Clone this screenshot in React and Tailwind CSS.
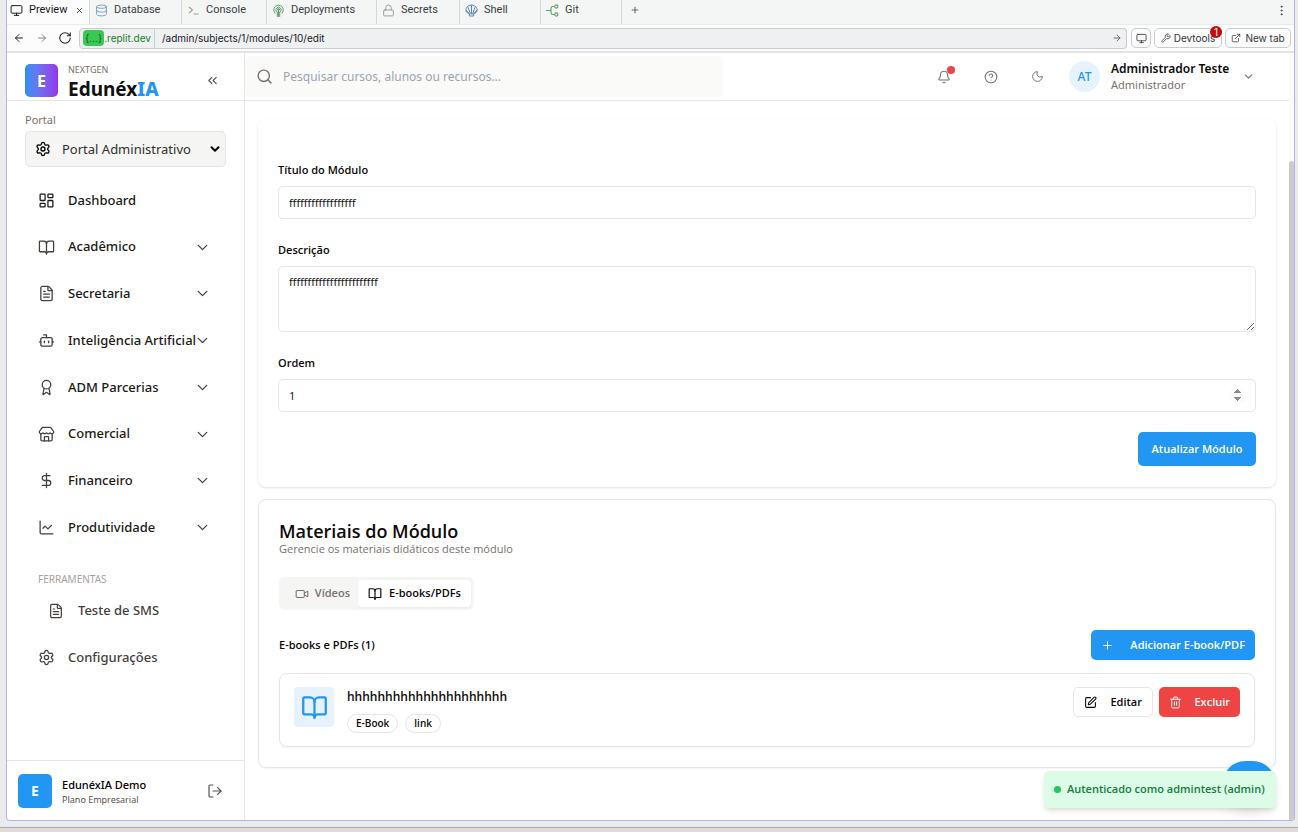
import React from "react";
import {
  Monitor, X, Database, Lock, Plus, EllipsisVertical, ArrowLeft, ArrowRight, RotateCw, Wrench, ExternalLink,
  ChevronsLeft, Search, Bell, CircleQuestionMark, Moon, ChevronDown, Settings, LayoutDashboard, BookOpen,
  FileText, Bot, Award, Store, DollarSign, ChartLine, LogOut, Video, SquarePen, Trash2,
} from "lucide-react";

const ConsoleIcon = () => (
  <svg width="13" height="13" viewBox="0 0 13 13" fill="none" stroke="#a89b84" strokeWidth="1.1">
    <path d="M2 3l3.5 3L2 9M6.500 10H11.500" />
  </svg>
);
const DeployIcon = () => (
  <svg width="13" height="13" viewBox="0 0 13 13" fill="none" stroke="#5f9c74" strokeWidth="1" strokeLinecap="round">
    <path d="M3 9.300A4.800 4.800 0 1 1 10 9.300M4.300 7.600A2.700 2.700 0 1 1 8.700 7.600M6.500 5.500V12.500M5.300 12.500V8M7.700 12.500V8" />
    <circle cx="6.500" cy="5.500" r="1" />
  </svg>
);
const ShellIcon = () => (
  <svg width="13" height="13" viewBox="0 0 13 13" fill="none" stroke="#5f86b8" strokeWidth="1" strokeLinejoin="round">
    <path d="M4.500 10.300L1.300 8C-.2 4.500 2.600 1 6.500 1s6.700 3.500 5.200 7L8.500 10.300L8.800 12H4.200zM5.500 10.300L3 3.200M6.500 10.300V1M7.500 10.300L10 3.200M4.800 10.300L1 6M8.200 10.300L12 6" />
  </svg>
);
const GitIcon = () => (
  <svg width="13" height="13" viewBox="0 0 13 13" fill="none" stroke="#5f9c6c" strokeWidth="1.100">
    <path d="M0 6.500H5M8.500 2.500H6.800Q5 2.500 5 4.300V8.700Q5 10.500 6.800 10.500H8.500" />
    <circle cx="10.300" cy="2.500" r="1.600" />
    <circle cx="10.300" cy="10.500" r="1.600" />
  </svg>
);

const tabs = [
  { name: "Database", w: "w-[92px]", icon: <Database size={13} strokeWidth={1.8} className="text-[#7d9cbd]" /> },
  { name: "Console", w: "w-[85px]", icon: <ConsoleIcon /> },
  { name: "Deployments", w: "w-[110px]", icon: <DeployIcon /> },
  { name: "Secrets", w: "w-[83px]", icon: <Lock size={13} strokeWidth={1.8} className="text-[#9a9a9a]" /> },
  { name: "Shell", w: "w-[81px]", icon: <ShellIcon /> },
  { name: "Git", w: "w-[81px]", icon: <GitIcon /> },
];

function BrowserTabs() {
  return (
    <div className="flex h-[25px] shrink-0 items-stretch border-b border-[#e9eaeb] bg-[#f4f6f6] font-[Roboto,sans-serif] text-[11px] text-[#3a3d42]">
      <button className="flex w-[83px] items-center border-r border-[#d4d6d8] bg-[#fcfcfc] pb-1 pl-[3px] text-[#17191c]">
        <Monitor size={13} strokeWidth={1.8} />
        <span className="ml-[6px]">Preview</span>
        <X size={9} strokeWidth={2} className="ml-auto mr-[5px]" />
      </button>
      {tabs.map((t) => (
        <button key={t.name} className={`flex items-center gap-[6px] border-r border-[#d4d6d8] pb-1 pl-[5px] ${t.w}`}>
          {t.icon}
          {t.name}
        </button>
      ))}
      <button aria-label="Nova aba" className="px-2 pb-1 text-[#666]"><Plus size={10} strokeWidth={2.5} /></button>
      <button aria-label="Mais opções" className="ml-auto mr-[6px] pb-1 text-[#444]"><EllipsisVertical size={13} strokeWidth={1.8} /></button>
    </div>
  );
}

const toolButton = "flex h-5 items-center justify-center rounded-[5px] border border-[#c9cbcd] bg-[#fcfcfc] text-[#33363a]";

function AddressBar() {
  return (
    <div className="flex h-7 shrink-0 items-center border-b-2 border-[#e2e3e5] bg-[#fcfcfc] pl-[6px] pr-[3px] text-[10px]">
      <button aria-label="Voltar"><ArrowLeft size={12} strokeWidth={2} className="text-[#222]" /></button>
      <button aria-label="Avançar" className="ml-[11px]"><ArrowRight size={12} strokeWidth={1.8} className="text-[#777]" /></button>
      <button aria-label="Recarregar" className="ml-[10px] mr-[7px]"><RotateCw size={14} strokeWidth={1.8} className="text-[#222]" /></button>
      <div className="flex h-[21px] w-[76px] items-center rounded-l-[4px] border border-[#c9cbcd] bg-[#eff0f2] pl-[3px] text-[#187a28]">
        <span className="flex h-4 items-center rounded-[4px] bg-[#3cc653] px-[2px] text-[#0d5c1c]">{"{...}"}</span>
        <span>.replit.dev</span>
      </div>
      <div className="mr-1 flex h-[21px] min-w-0 flex-1 items-center rounded-r-[4px] border border-l-0 border-[#c9cbcd] bg-[#eff0f2] pl-[7px] pr-1">
        <input aria-label="Endereço" defaultValue="/admin/subjects/1/modules/10/edit" className="min-w-0 flex-1 bg-transparent text-[10px] text-[#17191c] outline-none" />
        <ArrowRight size={10} strokeWidth={2} className="text-[#555]" />
      </div>
      <button aria-label="Dispositivo" className={`${toolButton} mr-[3px] w-5`}><Monitor size={11} strokeWidth={1.8} /></button>
      <button className={`${toolButton} relative mr-[3px] w-[68px] gap-[3px]`}>
        <Wrench size={10} strokeWidth={1.8} />
        Devtools
        <span className="absolute -right-px -top-[3px] flex size-3 items-center justify-center rounded-full bg-[#c40a0a] text-[10px] text-white">1</span>
      </button>
      <button className={`${toolButton} w-[66px] gap-[4px]`}><ExternalLink size={10} strokeWidth={1.8} />New tab</button>
    </div>
  );
}

const nav = [
  ["Dashboard", LayoutDashboard],
  ["Acadêmico", BookOpen],
  ["Secretaria", FileText],
  ["Inteligência Artificial", Bot],
  ["ADM Parcerias", Award],
  ["Comercial", Store],
  ["Financeiro", DollarSign],
  ["Produtividade", ChartLine],
];

function Sidebar() {
  return (
    <aside className="flex w-[238px] shrink-0 flex-col border-r border-[#e5e5e5] font-['Noto_Sans',sans-serif]">
      <div className="flex h-12 shrink-0 items-end border-b border-[#e5e5e5] pb-[3px] pl-[18px] pr-[24px]">
        <div className="flex size-[33px] items-center justify-center rounded-[5px] bg-linear-to-r from-[#2590f4] to-[#9333ea] text-[16px] font-bold text-white">E</div>
        <div className="-mb-[3px] ml-[10px] h-[36px]">
          <div className="text-[9px] leading-[12px] text-[#78716c]">NEXTGEN</div>
          <div className="text-[19px] font-bold leading-[26px] text-[#111]">Edunéx<span className="font-extrabold text-[#2196f3]">IA</span></div>
        </div>
        <button aria-label="Recolher" className="mb-[9px] ml-auto text-[#555]"><ChevronsLeft size={15} strokeWidth={1.8} /></button>
      </div>
      <div className="px-[18px] pt-[11px]">
        <label htmlFor="portal" className="block text-[11px] leading-4 text-[#78716c]">Portal</label>
        <div className="relative mt-[3px] flex h-9 items-center">
          <select id="portal" className="h-9 w-full appearance-none rounded-[5px] border border-[#e5e5e5] bg-[#f5f5f4] pl-9 pt-[2px] text-[13px] text-[#33302e]">
            <option>Portal Administrativo</option>
          </select>
          <Settings size={16} strokeWidth={2} className="pointer-events-none absolute left-[10px]" />
          <ChevronDown size={14} strokeWidth={3.5} className="pointer-events-none absolute right-[4px]" />
        </div>
      </div>
      <nav className="mt-[10px] text-[13px]">
        <div className="flex h-[374px] flex-col">
          {nav.map(([name, Icon], i) => (
            <button key={name} className="flex flex-1 items-center pl-[31px] pr-[33px] font-medium text-[#1c1917]">
              <Icon size={17} strokeWidth={1.8} className={i ? "shrink-0 text-[#44403c]" : "shrink-0 text-[#1c1917]"} />
              <span className="ml-[13px] min-w-0 flex-1 whitespace-nowrap text-left">{name}</span>
              {i > 0 && <ChevronDown size={17} strokeWidth={1.8} className="shrink-0 text-[#44403c]" />}
            </button>
          ))}
        </div>
        <div className="mt-[22px] pl-[31px] text-[10px] leading-3 text-[#a8a29e]">FERRAMENTAS</div>
        <a href="#sms" className="mt-[3px] flex h-[46px] items-center pl-[41px] font-medium text-[#44403c]">
          <FileText size={16} strokeWidth={1.8} /><span className="ml-[14px]">Teste de SMS</span>
        </a>
        <a href="#config" className="flex h-[47px] items-center pl-[31px] font-medium text-[#44403c]">
          <Settings size={17} strokeWidth={1.8} /><span className="ml-[13px]">Configurações</span>
        </a>
      </nav>
      <div className="mt-auto flex h-[60px] items-center border-t border-[#e5e5e5] pl-[11px] pr-[21px]">
        <div className="flex size-[34px] items-center justify-center rounded-[5px] bg-[#2196f3] text-[14px] font-bold text-white">E</div>
        <div className="ml-[10px] pt-[2px]">
          <div className="text-[11px] font-medium leading-4">EdunéxIA Demo</div>
          <div className="text-[9px] leading-[13px] text-[#57534e]">Plano Empresarial</div>
        </div>
        <button aria-label="Sair" className="ml-auto text-[#57534e]"><LogOut size={16} strokeWidth={1.8} /></button>
      </div>
    </aside>
  );
}

function Header() {
  return (
    <header className="flex h-12 shrink-0 items-center border-b border-[#e5e5e5] font-['Noto_Sans',sans-serif]">
      <div className="mb-[1px] flex h-[41px] w-[478px] items-center gap-[10px] rounded-[5px] bg-[#fafaf9] pl-[11px]">
        <Search size={17} strokeWidth={2} className="text-[#78716c]" />
        <input aria-label="Pesquisar" placeholder="Pesquisar cursos, alunos ou recursos..." className="flex-1 bg-transparent pt-[2px] text-[12px] outline-none placeholder:text-[#9ca3af]" />
      </div>
      <div className="ml-auto flex items-center gap-[33px] text-[#78716c]">
        <button aria-label="Notificações" className="relative">
          <Bell size={14} strokeWidth={1.8} />
          <span className="absolute -right-[4px] -top-[4px] size-2 rounded-full bg-[#ef4444]" />
        </button>
        <button aria-label="Ajuda"><CircleQuestionMark size={14} strokeWidth={1.8} /></button>
        <button aria-label="Tema escuro"><Moon size={13} strokeWidth={1.8} /></button>
      </div>
      <button className="ml-[25px] mr-[34px] flex items-center text-left">
        <span className="flex size-[31px] items-center justify-center rounded-full bg-[#e6f3fe] text-[12px] font-medium text-[#2196f3]">AT</span>
        <span className="ml-[11px] w-[131px]">
          <span className="block text-[12px] font-semibold leading-4 text-[#0c0a09]">Administrador Teste</span>
          <span className="block text-[11px] leading-[15px] text-[#78716c]">Administrador</span>
        </span>
        <ChevronDown size={13} strokeWidth={2} className="text-[#78716c]" />
      </button>
    </header>
  );
}

const field = "block w-full rounded-[5px] border border-[#e5e5e5] bg-white px-[10px] text-[11px] text-[#0c0a09] outline-none";
const label = "block text-[11px] font-semibold leading-4 text-[#0c0a09]";

function ModuleForm() {
  return (
    <form className="rounded-lg border border-transparent px-[19px] pb-5 pt-[42px] shadow-sm" onSubmit={(e) => e.preventDefault()}>
      <label htmlFor="titulo" className={label}>Título do Módulo</label>
      <input id="titulo" defaultValue="ffffffffffffffffff" className={`${field} mt-2 h-[33px]`} />
      <label htmlFor="descricao" className={`${label} mt-[23px]`}>Descrição</label>
      <textarea id="descricao" defaultValue="ffffffffffffffffffffffff" className={`${field} mt-2 h-[66px] resize-y pt-[6px] leading-[17px]`} />
      <label htmlFor="ordem" className={`${label} mt-[23px]`}>Ordem</label>
      <input id="ordem" type="number" defaultValue="1" className={`${field} mt-2 h-[33px] [&::-webkit-inner-spin-button]:opacity-100`} />
      <button className="ml-auto mt-5 block h-[34px] w-[118px] rounded-[5px] bg-[#2196f3] text-[11px] font-semibold text-white">Atualizar Módulo</button>
    </form>
  );
}

function Materials() {
  const badge = "flex h-[19px] items-center rounded-full border border-[#e5e5e5] px-2 text-[10px] font-semibold";
  return (
    <section className="mt-3 rounded-lg border border-[#e5e5e5] px-5 pb-5 pt-[19px] text-[#0c0a09] shadow-xs">
      <h2 className="text-[18px] font-semibold leading-6">Materiais do Módulo</h2>
      <p className="text-[11px] leading-3 text-[#78716c]">Gerencie os materiais didáticos deste módulo</p>
      <div role="tablist" className="mt-[22px] flex h-[33px] w-[195px] items-center rounded-[6px] bg-[#f5f5f4] p-[3px] text-[11px] font-semibold">
        <button role="tab" aria-selected="false" className="flex w-[76px] items-center justify-end gap-[6px] pr-[8px] text-[#78716c]">
          <Video size={14} strokeWidth={1.8} />Vídeos
        </button>
        <button role="tab" aria-selected="true" className="flex h-[27px] flex-1 items-center justify-center gap-[7px] whitespace-nowrap rounded-[4px] bg-white shadow-xs">
          <BookOpen size={14} strokeWidth={2} />E-books/PDFs
        </button>
      </div>
      <div className="mt-5 flex items-center justify-between">
        <h3 className="text-[11px] font-semibold">E-books e PDFs (1)</h3>
        <button className="flex h-[30px] w-[164px] items-center justify-between rounded-[5px] bg-[#2196f3] px-[10px] text-[11px] font-semibold text-white">
          <Plus size={13} strokeWidth={1.8} />Adicionar E-book/PDF
        </button>
      </div>
      <article className="mt-[13px] flex h-[74px] items-start rounded-lg border border-[#e5e5e5] px-[14px] pt-[13px] shadow-xs">
        <div className="flex size-10 items-center justify-center rounded-[4px] bg-[#e6f3fe] text-[#2196f3]"><BookOpen size={27} strokeWidth={2} /></div>
        <div className="ml-[13px]">
          <h4 className="text-[12px] font-semibold leading-5">hhhhhhhhhhhhhhhhhhhhh</h4>
          <div className="mt-[7px] flex gap-[7px]"><span className={badge}>E-Book</span><span className={badge}>link</span></div>
        </div>
        <div className="ml-auto flex gap-[6px] text-[11px] font-semibold">
          <button className="flex h-[30px] w-[80px] items-center justify-between rounded-[5px] border border-[#e5e5e5] px-[10px]"><SquarePen size={13} strokeWidth={2} />Editar</button>
          <button className="flex h-[30px] w-[81px] items-center justify-between rounded-[5px] bg-[#ef4444] px-[10px] text-white"><Trash2 size={13} strokeWidth={1.8} />Excluir</button>
        </div>
      </article>
    </section>
  );
}

export default function App() {
  return (
    <div className="flex h-screen flex-col bg-[#e9ebed] font-['Inter',sans-serif]">
      <div className="flex min-h-0 flex-1 items-stretch pl-[6px] pr-[3px]">
        <div className="relative flex min-w-0 flex-1 flex-col overflow-hidden rounded-b-[4px] border border-t-0 border-[#b9aef5] bg-white">
          <BrowserTabs />
          <AddressBar />
          <div className="flex min-h-0 flex-1">
            <Sidebar />
            <div className="flex min-w-0 flex-1 flex-col">
              <Header />
              <main className="min-h-0 flex-1 overflow-hidden pl-[13px] pr-[13px] pt-[18px] font-['Open_Sans',sans-serif]">
                <ModuleForm />
                <Materials />
              </main>
            </div>
            <div className="flex w-[5px] shrink-0 flex-col bg-[#fafafa] pt-[108px]"><div className="flex-1 rounded-t-[3px] bg-[#cccaca]" /></div>
          </div>
          <button aria-label="Assistente" className="absolute bottom-[15px] right-[19px] h-[44px] w-[52px] rounded-full bg-[#2196f3] shadow-lg" />
          <div role="status" className="absolute bottom-[12px] right-[18px] flex h-[37px] w-[232px] items-center gap-[6px] rounded-[5px] bg-[#dcfce7] pl-[10px] text-[11px] font-semibold text-[#15803d] shadow-md font-['Open_Sans',sans-serif]">
            <span className="size-[7px] shrink-0 rounded-full bg-[#22c55e]" />
            <span className="whitespace-nowrap">Autenticado como admintest (admin)</span>
          </div>
        </div>
      </div>
      <div className="mt-[6px] h-[5px] shrink-0 border-t border-[#a9a9ab] bg-[#dedbd8]" />
    </div>
  );
}
